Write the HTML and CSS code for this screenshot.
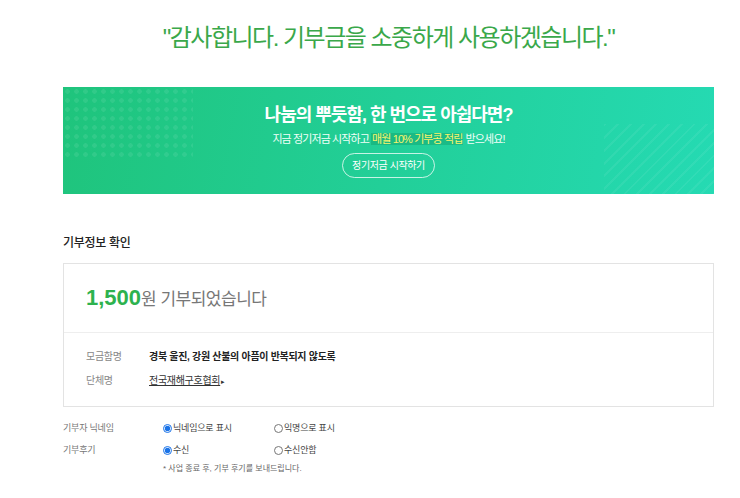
FILE: index.html
```html
<!DOCTYPE html>
<html lang="ko">

<head>
    <meta charset="UTF-8">
    <title>기부 완료</title>
    <link rel="stylesheet" href="styles.css">
</head>

<body>
    <div class="page">
        <h1 class="thanks">"감사합니다. 기부금을 소중하게 사용하겠습니다."</h1>

        <div class="banner">
            <p class="banner-title">나눔의 뿌듯함, 한 번으로 아쉽다면?</p>
            <p class="banner-sub">지금 정기저금 시작하고 <span class="point">매월 10% 기부콩 적립</span> 받으세요!</p>
            <a class="banner-btn" href="#">정기저금 시작하기</a>
        </div>

        <h2 class="section-title">기부정보 확인</h2>
        <div class="info-box">
            <div class="amount">
                <strong>1,500</strong><span>원 기부되었습니다</span>
            </div>
            <dl class="info-list">
                <div class="info-row">
                    <dt>모금함명</dt>
                    <dd class="bold">경북 울진, 강원 산불의 아픔이 반복되지 않도록</dd>
                </div>
                <div class="info-row">
                    <dt>단체명</dt>
                    <dd><a class="org" href="#">전국재해구호협회</a><span class="arrow">&#9656;</span></dd>
                </div>
            </dl>
        </div>

        <div class="options">
            <div class="opt-row">
                <span class="opt-label">기부자 닉네임</span>
                <label class="opt"><input type="radio" name="nick" checked>닉네임으로 표시</label>
                <label class="opt"><input type="radio" name="nick">익명으로 표시</label>
            </div>
            <div class="opt-row">
                <span class="opt-label">기부후기</span>
                <label class="opt"><input type="radio" name="review" checked>수신</label>
                <label class="opt"><input type="radio" name="review">수신안함</label>
            </div>
            <p class="note">* 사업 종료 후, 기부 후기를 보내드립니다.</p>
        </div>
    </div>
</body>

</html>
```

FILE: styles.css
```css
body {
    margin: 0;
    background-color: #fff;
    font-family: "Liberation Sans", "Noto Sans CJK KR", sans-serif;
    color: #222;
}

p,
h1,
h2,
dl,
dd {
    margin: 0;
}

.page {
    width: 651px;
    margin-left: 63px;
}

.thanks {
    padding-top: 20px;
    line-height: 36px;
    font-size: 24px;
    font-weight: 400;
    letter-spacing: -1.5px;
    text-align: center;
    color: #3aa84a;
}

.banner {
    position: relative;
    overflow: hidden;
    margin-top: 31px;
    height: 107px;
    box-sizing: border-box;
    padding-top: 15px;
    text-align: center;
    background: linear-gradient(100deg, #1fc47c 0%, #22cf98 50%, #25dab3 100%);
    color: #fff;
}

.banner::before {
    content: "";
    position: absolute;
    left: 0;
    top: 0;
    width: 130px;
    height: 70px;
    background-image: radial-gradient(circle, rgba(255, 255, 255, 0.08) 2px, transparent 2.5px);
    background-size: 9px 9px;
}

.banner::after {
    content: "";
    position: absolute;
    right: 0;
    bottom: 0;
    width: 110px;
    height: 70px;
    background-image: repeating-linear-gradient(135deg, rgba(255, 255, 255, 0.06) 0 2px, transparent 2px 9px);
}

.banner-title {
    position: relative;
    line-height: 26px;
    font-size: 18px;
    font-weight: 700;
    letter-spacing: -1px;
}

.banner-sub {
    position: relative;
    margin-top: 1px;
    line-height: 20px;
    font-size: 11px;
    letter-spacing: -0.9px;
    color: #f2fff8;
}

.point {
    color: #f8f46a;
    background-color: rgba(0, 110, 60, 0.22);
    padding: 0 1px;
}

.banner-btn {
    position: relative;
    display: inline-block;
    margin-top: 4px;
    width: 93px;
    height: 25px;
    line-height: 23px;
    box-sizing: border-box;
    border: 1px solid rgba(255, 255, 255, 0.75);
    border-radius: 13px;
    font-size: 10px;
    letter-spacing: -0.4px;
    color: #fff;
    text-decoration: none;
}

.section-title {
    margin-top: 40px;
    line-height: 18px;
    font-size: 12px;
    font-weight: 500;
    letter-spacing: -0.3px;
    color: #222;
}

.info-box {
    margin-top: 11px;
    border: 1px solid #e3e3e3;
}

.amount {
    padding: 19px 22px 17px;
    line-height: 30px;
    border-bottom: 1px solid #eeeeee;
}

.amount strong {
    font-size: 22px;
    color: #2db24e;
}

.amount span {
    font-size: 17px;
    letter-spacing: -0.5px;
    color: #777;
}

.info-list {
    padding: 15px 22px 15px;
}

.info-row {
    display: flex;
    line-height: 18px;
    font-size: 10px;
    letter-spacing: -0.3px;
}

.info-row + .info-row {
    margin-top: 6px;
}

.info-row dt {
    width: 63px;
    color: #888;
}

.bold {
    font-weight: 700;
    color: #222;
}

.org {
    color: #333;
    text-decoration: underline;
}

.arrow {
    font-size: 7px;
    margin-left: 1px;
    color: #333;
}

.options {
    margin-top: 12px;
}

.opt-row {
    display: flex;
    align-items: center;
    line-height: 18px;
    font-size: 9px;
    letter-spacing: -0.2px;
}

.opt-row + .opt-row {
    margin-top: 4px;
}

.opt-label {
    width: 100px;
    color: #777;
}

.opt {
    display: flex;
    align-items: center;
    width: 111px;
    color: #444;
}

.opt input {
    width: 9px;
    height: 9px;
    margin: 0 1px 0 0;
    accent-color: #1a73e8;
}

.note {
    margin-top: 3px;
    margin-left: 100px;
    line-height: 14px;
    font-size: 8px;
    color: #666;
}
```
